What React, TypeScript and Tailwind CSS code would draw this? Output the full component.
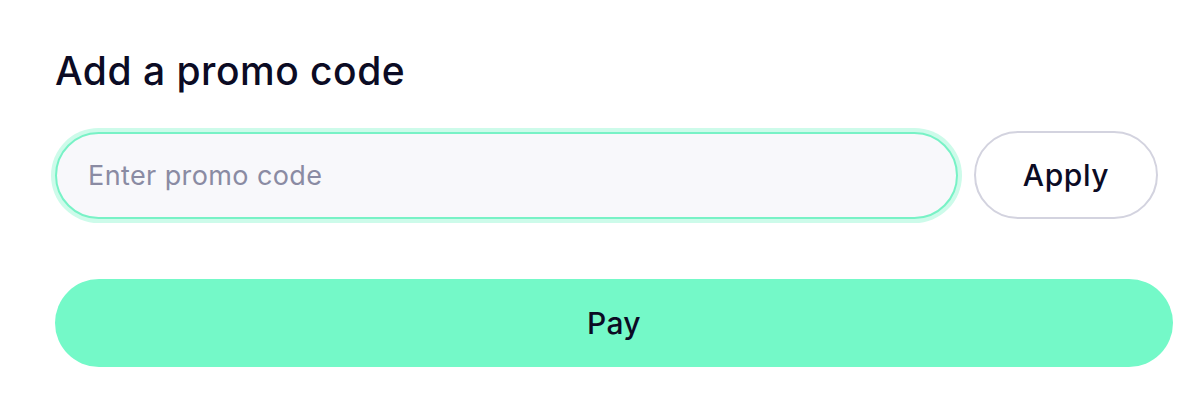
import { useState } from 'react';

export default function App() {
  const [code, setCode] = useState('');

  return (
    <div className="w-[1198px] h-[402px] bg-white pl-[55px] pr-[25px] pt-[48px] font-['Inter',sans-serif] text-[#0b0b24]">
      <h2 className="text-[39px] leading-[46px] font-medium tracking-[0.5px]">Add a promo code</h2>
      <div className="flex items-center gap-4 mt-[37px] mr-[15px]">
        <input
          type="text"
          value={code}
          onChange={(e) => setCode(e.target.value)}
          placeholder="Enter promo code"
          className="flex-1 h-[87px] rounded-full bg-[#f8f8fb] border-2 border-[#78f2c6] ring-4 ring-[#cdfbea] px-[31px] text-[27px] tracking-[0.4px] outline-none placeholder:text-[#8a8ba3]"
        />
        <button className="w-[184px] h-[88px] rounded-full border-2 border-[#d3d3df] bg-white text-[30px] tracking-[0.6px] font-medium">
          Apply
        </button>
      </div>
      <button className="mt-[60px] w-full h-[88px] rounded-full bg-[#74f9c8] text-[30px] tracking-[0.3px] font-medium">
        Pay
      </button>
    </div>
  );
}
